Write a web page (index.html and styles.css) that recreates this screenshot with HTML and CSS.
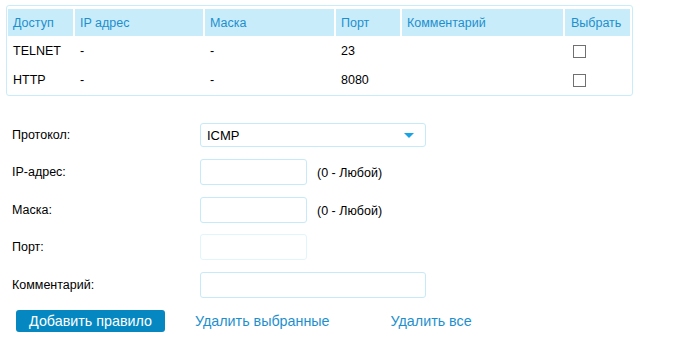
FILE: index.html
```html
<!DOCTYPE html>
<html>
<head>
<meta charset="utf-8">
<link rel="stylesheet" href="styles.css">
</head>
<body>
<div class="table-box">
  <div class="grid">
    <div class="th">Доступ</div>
    <div class="th">IP адрес</div>
    <div class="th">Маска</div>
    <div class="th">Порт</div>
    <div class="th">Комментарий</div>
    <div class="th">Выбрать</div>

    <div class="td">TELNET</div>
    <div class="td">-</div>
    <div class="td">-</div>
    <div class="td">23</div>
    <div class="td"></div>
    <div class="td"><span class="chk"></span></div>

    <div class="td">HTTP</div>
    <div class="td">-</div>
    <div class="td">-</div>
    <div class="td">8080</div>
    <div class="td"></div>
    <div class="td"><span class="chk"></span></div>
  </div>
</div>

<div class="form">
  <div class="row row-select">
    <label class="lbl">Протокол:</label>
    <div class="select"><span>ICMP</span><span class="caret"></span></div>
  </div>
  <div class="row">
    <label class="lbl">IP-адрес:</label>
    <div class="input short"></div>
    <span class="hint">(0 - Любой)</span>
  </div>
  <div class="row row-tight">
    <label class="lbl">Маска:</label>
    <div class="input short"></div>
    <span class="hint">(0 - Любой)</span>
  </div>
  <div class="row">
    <label class="lbl">Порт:</label>
    <div class="input short disabled"></div>
  </div>
  <div class="row">
    <label class="lbl">Комментарий:</label>
    <div class="input long"></div>
  </div>
  <div class="actions">
    <button class="btn">Добавить правило</button>
    <a class="link link-sel">Удалить выбранные</a>
    <a class="link link-all">Удалить все</a>
  </div>
</div>
</body>
</html>
```

FILE: styles.css
```css
html, body {
  margin: 0;
  padding: 0;
  background: #fff;
  font-family: "Liberation Sans", Arial, sans-serif;
  font-size: 12.5px;
  color: #000;
}

.table-box {
  margin: 5px 0 0 6px;
  width: 624px;
  border: 1px solid #c9ecfa;
  border-radius: 3px;
  padding: 3px 0 1px 1px;
}

.grid {
  display: grid;
  grid-template-columns: 65px 128px 129px 64px 161px 65px;
  grid-template-rows: 27px 29px 29px;
  column-gap: 2px;
}

.th {
  background: #c8ecfa;
  color: #1e8fcd;
  padding-left: 5px;
  display: flex;
  align-items: center;
}

.grid .th:nth-child(6) { padding-left: 6px; }

.td {
  padding-left: 5px;
  display: flex;
  align-items: center;
  padding-top: 1px;
}

.chk {
  display: block;
  width: 11px;
  height: 11px;
  border: 1px solid #707070;
  margin-left: 3px;
}

.form {
  margin-top: 27px;
  padding-left: 12px;
}

.row {
  display: flex;
  align-items: center;
  height: 26px;
  margin-bottom: 12px;
}

.row-select {
  height: 24px;
  margin-bottom: 12px;
}

.row-tight {
  margin-bottom: 11px;
}

.lbl {
  width: 188px;
}

.select {
  box-sizing: border-box;
  width: 226px;
  height: 24px;
  border: 1px solid #c6eaf8;
  border-radius: 3px;
  display: flex;
  align-items: center;
  justify-content: space-between;
  padding: 0 11px 0 6px;
  font-size: 13px;
}

.caret {
  width: 0;
  height: 0;
  border-left: 5px solid transparent;
  border-right: 5px solid transparent;
  border-top: 5px solid #18a3e4;
}

.input {
  box-sizing: border-box;
  height: 26px;
  border: 1px solid #c6eaf8;
  border-radius: 3px;
}

.input.short { width: 107px; }
.input.long { width: 226px; }
.input.disabled { border-color: #e2f5fc; }

.hint {
  font-size: 12.5px;
  margin-left: 10px;
  margin-top: 2px;
}

.actions {
  display: flex;
  align-items: center;
  margin-left: 4px;
}

.btn {
  width: 149px;
  height: 22px;
  background: #0588c2;
  color: #fff;
  border: none;
  border-radius: 3px;
  font-family: "Liberation Sans", Arial, sans-serif;
  font-size: 14.3px;
  padding: 0;
}

.link {
  color: #1e8fcd;
  font-size: 14.3px;
}

.link-sel { margin-left: 30px; }
.link-all { margin-left: 61px; }
```
